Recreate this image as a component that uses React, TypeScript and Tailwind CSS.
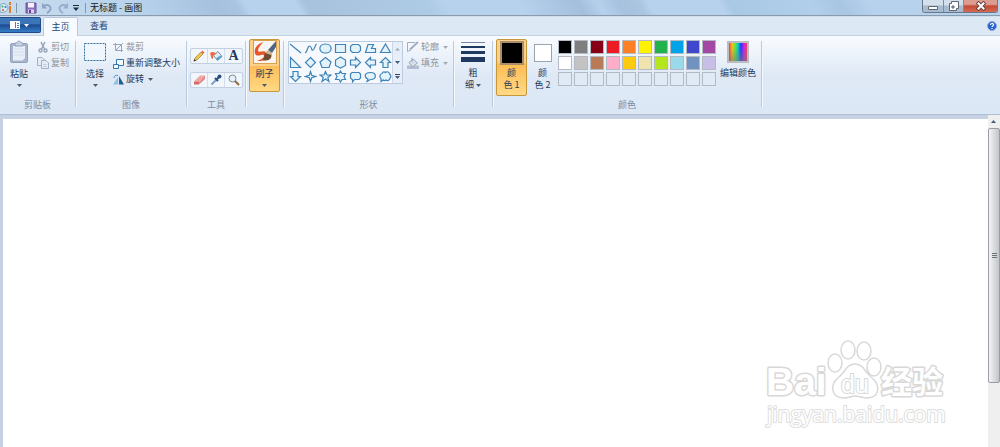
import type { ReactNode } from 'react'

const PALETTE = [
  ['#000000', '#7f7f7f', '#880015', '#ed1c24', '#ff7f27', '#fff200', '#22b14c', '#00a2e8', '#3f48cc', '#a349a4'],
  ['#ffffff', '#c3c3c3', '#b97a57', '#ffaec9', '#ffc90e', '#efe4b0', '#b5e61d', '#99d9ea', '#7092be', '#c8bfe7'],
  ['', '', '', '', '', '', '', '', '', ''],
]

const SHAPES = [
  { name: '直线', d: 'M1 2L12 11' },
  { name: '曲线', d: 'M1 11C4 10 3 4 5.500 4S7 9 9 8S11 3 12.500 2' },
  { name: '椭圆形', d: 'M6.500 2C14 2 14 11 6.500 11S-1 2 6.500 2Z' },
  { name: '矩形', d: 'M1.500 2.500H11.500V10.500H1.500Z' },
  { name: '圆角矩形', d: 'M3.500 2.500H9.500L11.500 4.500V8.500L9.500 10.500H3.500L1.500 8.500V4.500Z' },
  { name: '多边形', d: 'M4 2.500H9.500L7.500 6.500H11.500V10.500H1.500Z' },
  { name: '三角形', d: 'M6.500 2L11.500 10.500H1.500Z' },
  { name: '直角三角形', d: 'M1.500 1.500L11.500 11.500H1.500Z' },
  { name: '菱形', d: 'M6.500 1.500L11.500 6.500L6.500 11.500L1.500 6.500Z' },
  { name: '五边形', d: 'M6.500 1.500L12 6L10 11.500H3L1 6Z' },
  { name: '六边形', d: 'M6.500 1L11.500 4V9.500L6.500 12L1.500 9.500V4Z' },
  { name: '右箭头', d: 'M1.500 4H6.500V1.500L11.500 6.500L6.500 11.500V9H1.500Z' },
  { name: '左箭头', d: 'M11.500 4H6.500V1.500L1.500 6.500L6.500 11.500V9H11.500Z' },
  { name: '上箭头', d: 'M4 11.500V6.500H1.500L6.500 1.500L11.500 6.500H9V11.500Z' },
  { name: '下箭头', d: 'M4 1.500V6.500H1.500L6.500 11.500L11.500 6.500H9V1.500Z' },
  { name: '四角星形', d: 'M6.500 1.500L7.700 5.300L11.500 6.500L7.700 7.700L6.500 11.500L5.300 7.700L1.500 6.500L5.300 5.300Z' },
  { name: '五角星形', d: 'M6.500 1.500L8 5H12L8.800 7.500L10 11.500L6.500 9L3 11.500L4.200 7.500L1 5H5Z' },
  { name: '六角星形', d: 'M6.500 1L8 3.500H11.500L10 6.500L11.500 9.500H8L6.500 12L5 9.500H1.500L3 6.500L1.500 3.500H5Z' },
  { name: '圆角矩形标注', d: 'M3 2.500H10L11.500 4V8L10 9.500H5.500L3.500 12V9.500H3L1.500 8V4Z' },
  { name: '椭圆形标注', d: 'M4 9C0 7.500 0 2.500 6.500 2.500S13 9.500 6.500 9.500L3 11.500Z' },
  { name: '云形标注', d: 'M3 3.500C4 1 6 2 6.500 2.500C8 1 10.500 2 10.500 4C12.500 5 12 7.500 11 8C11 10.500 8 11 7 10C6 11 4 10.500 4 10L2 11.500V8.500C0 7 1 4 3 3.500Z' },
]

function Arrow({ dim = false }: { dim?: boolean }) {
  return (
    <svg viewBox="0 0 5 3" className={dim ? 'h-[3px] w-[5px] shrink-0 fill-[#a3abb5]' : 'h-[3px] w-[5px] shrink-0 fill-[#4a5c75]'}>
      <path d="M0 0H5L2.500 3Z" />
    </svg>
  )
}

function Separator() {
  return <div className="mt-0.5 mb-1 w-px shrink-0 bg-[#bccadd] shadow-[1px_0_0_#f4f8fd]" />
}

function Group({ label, className, children }: { label: string; className: string; children: ReactNode }) {
  return (
    <section aria-label={label} className={`flex h-[72px] shrink-0 flex-col ${className}`}>
      <div className="flex flex-1 items-start">{children}</div>
      <div className="h-3 text-center leading-3 text-[#7c8ba2]">{label}</div>
    </section>
  )
}

function SmallButton({ icon, label, disabled = false, arrow = false }: {
  icon: ReactNode
  label: string
  disabled?: boolean
  arrow?: boolean
}) {
  return (
    <button
      type="button"
      disabled={disabled}
      className="flex h-4 items-center gap-0.5 whitespace-nowrap leading-3 disabled:text-[#8e9299]"
    >
      {icon}
      <span>{label}</span>
      {arrow && <span className="ml-0.5"><Arrow dim={disabled} /></span>}
    </button>
  )
}

function BigButton({ icon, label, className }: { icon: ReactNode; label: string; className: string }) {
  return (
    <button type="button" className={`flex flex-col items-center ${className}`}>
      <span className="flex h-6 items-center">{icon}</span>
      <span className="mt-1 leading-3">{label}</span>
      <span className="mt-1"><Arrow /></span>
    </button>
  )
}

function PasteIcon() {
  return (
    <svg viewBox="0 0 20 24" className="h-6 w-5">
      <rect x="1.500" y="3.500" width="17" height="19" rx="1.500" fill="#a8b5cd" stroke="#94a2bd" />
      <path d="M4 6H16V18L13.500 20.500H4Z" fill="#e9eff8" />
      <path d="M5 9H15M5 12H15M5 15H15" stroke="#d2dceb" />
      <path d="M6 3H8C8 .5 12 .5 12 3H14V6H6Z" fill="#c9d3e3" stroke="#94a2bd" />
    </svg>
  )
}

function CutIcon() {
  return (
    <svg viewBox="0 0 12 12" className="h-3 w-3" fill="none" stroke="#98a5ba" strokeWidth="1.500">
      <path d="M4 1L7.500 8M8 1L4.500 8" />
      <circle cx="3.500" cy="9.500" r="1.500" />
      <circle cx="8.500" cy="9.500" r="1.500" />
    </svg>
  )
}

function CopyIcon() {
  return (
    <svg viewBox="0 0 12 12" className="h-3 w-3" fill="#e6edf7" stroke="#a2b0c8">
      <path d="M.5 .5H5L7.500 3V8.500H.5Z" />
      <path d="M4.500 3.500H9L11.500 6V11.500H4.500Z" />
      <path d="M6 7.500H10M6 9.500H10" stroke="#c3cede" />
    </svg>
  )
}

function CropIcon() {
  return (
    <svg viewBox="0 0 11 11" className="h-[11px] w-[11px]" fill="none" stroke="#98a4b7">
      <path d="M2.500 1V8.500H10M0 2.500H8.500V10M3 8L10 1" />
    </svg>
  )
}

function ResizeIcon() {
  return (
    <svg viewBox="0 0 11 11" className="h-[11px] w-[11px]" fill="#f4faff" stroke="#2f78b0">
      <path d="M3.500 1.500H10.500V7.500H3.500Z" />
      <path d="M.5 6.500H5.500V10.500H.5Z" />
    </svg>
  )
}

function RotateIcon() {
  return (
    <svg viewBox="0 0 11 11" className="h-[11px] w-[11px]">
      <path d="M5 3V10.500H0Z" fill="#8cc0e6" />
      <path d="M6 2L11 10.500H6Z" fill="#1c5f94" />
      <path d="M1 4C1 1.500 3 1 5 1.500" fill="none" stroke="#3b8ec9" />
    </svg>
  )
}

function OutlineIcon() {
  return (
    <svg viewBox="0 0 12 12" className="h-3 w-3" fill="none" stroke="#a0adc2">
      <path d="M8 1.500H.5V10.500L4 9" />
      <path d="M3 8.500L11 1" strokeWidth="2" />
    </svg>
  )
}

function FillIcon() {
  return (
    <svg viewBox="0 0 12 12" className="h-3 w-3">
      <path d="M0 8.500H12V12H0Z" fill="#b1bed3" />
      <path d="M2 5.500L6 2L10.500 6L5.500 10Z" fill="#d7dfeb" stroke="#98a6bd" />
      <path d="M5 5V.5" stroke="#98a6bd" />
    </svg>
  )
}

const TOOL_ROWS: { name: string; icon: ReactNode }[][] = [
  [
    {
      name: '铅笔',
      icon: (
        <svg viewBox="0 0 12 12" className="h-3 w-3">
          <path d="M1 11L2 8L8 2L10 4L4 10Z" fill="#f0c452" stroke="#a07a35" strokeWidth=".7" />
          <path d="M8 2L9.500 .8L11.500 2.500L10 4Z" fill="#d9694f" />
          <path d="M.5 11.500L1.500 9L3 10.500Z" fill="#333" />
        </svg>
      ),
    },
    {
      name: '用颜色填充',
      icon: (
        <svg viewBox="0 0 13 12" className="h-3 w-[13px]">
          <path d="M3.500 5.500L8 1.500L12 6.500L7.500 10.500Z" fill="#dfedf7" stroke="#7095b6" />
          <path d="M7 7.500L11 5.500L12 6.500L7.500 10.500L6 9Z" fill="#5b9dcb" />
          <path d="M0 3C2 1 5 2 7 4C4 4 3 5 3 9C1 9 1 6 0 3Z" fill="#ef6d3e" />
        </svg>
      ),
    },
    { name: '文本', icon: <span className="font-['Liberation_Serif',serif] text-sm font-bold leading-3 text-[#1f3a5f]">A</span> },
  ],
  [
    {
      name: '橡皮擦',
      icon: (
        <svg viewBox="0 0 13 12" className="h-3 w-[13px]">
          <path d="M1 7.500L7 1.500H12L7 7.500Z" fill="#f1a7a0" />
          <path d="M1 7.500H7L6 10.500H1Z" fill="#d66a67" />
          <path d="M7 7.500L12 1.500V5L6 10.500Z" fill="#e0837d" />
        </svg>
      ),
    },
    {
      name: '颜色选取器',
      icon: (
        <svg viewBox="0 0 12 12" className="h-3 w-3">
          <path d="M1.500 10.500L7 5" stroke="#7da2c6" strokeWidth="2" />
          <path d="M5 4L8 7M7 5L10 2" stroke="#27517e" strokeWidth="2" />
          <circle cx="9.500" cy="2.500" r="2" fill="#27517e" />
        </svg>
      ),
    },
    {
      name: '放大镜',
      icon: (
        <svg viewBox="0 0 12 12" className="h-3 w-3">
          <circle cx="4.500" cy="4.500" r="3.500" fill="#e3f1fa" stroke="#7f8d9c" />
          <path d="M7 7L11 11" stroke="#95673e" strokeWidth="2" />
        </svg>
      ),
    },
  ],
]

function BrushIcon() {
  return (
    <svg viewBox="0 0 24 24" className="h-6 w-6">
      <rect x=".5" y=".5" width="23" height="23" fill="#f8f5f1" stroke="#d8a24d" />
      <path d="M11 2C2 4 0 12 3 15C5 17 11 13 11 16C11 18 7 20 4 21C13 22 17 15 13 12C10 10 6 13 5 11C5 8 8 4 11 2Z" fill="#e8542a" />
      <path d="M23 1L15 10L19 13L23 7Z" fill="#4b6788" />
      <path d="M12 13L18 13C20 18 16 22 9 20C12 19 11 15 12 13Z" fill="#704a31" />
      <path d="M15 10L19 13L18 15L12 13Z" fill="#c9b08c" />
    </svg>
  )
}

function TitleBar() {
  return (
    <header className="flex h-[17px] items-start border-b border-[#d3deea] bg-[linear-gradient(60deg,#c9dcef_0%,#b8d3ec_14%,#a6c1de_22%,#a9c4e0_24%,#b7d2ed_25%,#b7d2ed_30%,#a7c2dd_31%,#aecbe6_43%,#b7d2ed_45%,#b7d2ed_52%,#a4bfdb_58%,#b6d1ec_60%,#a6c2de_62%,#a9c5e0_64%,#b7d2ed_65%,#b7d2ed_72%,#a9c8e4_73%,#b1cfea_81%,#a8c6e2_84%,#b7d2ed_87%)]">
      <div className="flex h-4 flex-1 items-start border-b border-[#899caf]">
        <div className="flex h-[15px] items-center">
          <svg viewBox="0 0 12 13" className="h-[13px] w-3">
            <path d="M0 4C3 1 8 3 8 7S3 12 0 11Z" fill="#d4e9f5" stroke="#7ba5c1" />
            <circle cx="2.500" cy="5.500" r="1" fill="#3aa856" />
            <circle cx="5.500" cy="6" r="1" fill="#3c70c8" />
            <circle cx="3" cy="9" r="1" fill="#db5034" />
            <path d="M10 12V5M10 1V4" stroke="#e57b26" strokeWidth="2" />
          </svg>
          <div className="mx-1 h-2.5 w-px bg-[#8296ac]" />
          <div className="flex items-center gap-1 pl-1">
            <button type="button" aria-label="保存">
              <svg viewBox="0 0 12 12" className="h-3 w-3">
                <path d="M1 1H11V11H1Z" fill="#8a6bbb" stroke="#6c52a0" />
                <path d="M3 1H9V5.500H3Z" fill="#f3f2fb" />
                <path d="M3 7.500H9V11H3Z" fill="#d9d3ec" />
                <path d="M4 8H6V11H4Z" fill="#59418d" />
              </svg>
            </button>
            <button type="button" aria-label="撤消" disabled>
              <svg viewBox="0 0 12 12" className="h-3 w-3" fill="none" stroke="#8ea6c6" strokeWidth="2">
                <path d="M3 3.500C8 2 10 5 9.500 7C9 9 8 10 6 11" />
                <path d="M1 .5V6.500H6Z" fill="#8ea6c6" stroke="none" />
              </svg>
            </button>
            <button type="button" aria-label="重做" disabled>
              <svg viewBox="0 0 12 12" className="h-3 w-3" fill="none" stroke="#98aeca" strokeWidth="2">
                <path d="M9 3.500C4 2 2 5 2.500 7C3 9 4 10 6 11" />
                <path d="M11 .5V6.500H6Z" fill="#98aeca" stroke="none" />
              </svg>
            </button>
            <button type="button" aria-label="自定义快速访问工具栏">
              <svg viewBox="0 0 6 6" className="h-1.5 w-1.5">
                <path d="M0 0H6V1H0ZM0 2.500H6L3 6Z" fill="#1d2b3c" />
              </svg>
            </button>
          </div>
          <div className="mr-1 ml-1.5 h-2.5 w-px bg-[#8296ac]" />
          <h1 className="whitespace-nowrap leading-[15px] text-[#101820]">无标题 - 画图</h1>
        </div>
        <div className="mr-0.5 ml-auto flex h-[13px] overflow-hidden rounded-b-[3px] border border-t-0 border-[#68788a]">
          <button type="button" aria-label="最小化" className="flex w-[21px] items-center justify-center border-r border-[#7d8c9e] bg-linear-to-b from-[#d3dfeb] from-40% to-[#a9bccf] to-50%">
            <svg viewBox="0 0 10 10" className="h-2.5 w-2.5">
              <path d="M.5 5.500H9.500V8.500H.5Z" fill="#fff" stroke="#5d6876" />
            </svg>
          </button>
          <button type="button" aria-label="还原" className="flex w-5 items-center justify-center border-r border-[#7d8c9e] bg-linear-to-b from-[#d3dfeb] from-40% to-[#a9bccf] to-50%">
            <svg viewBox="0 0 10 10" className="h-2.5 w-2.5">
              <path d="M2.500 .5H9.500V7.500H7.500V9.500H.5V2.500H2.500Z" fill="#fff" stroke="#5d6876" />
              <path d="M3 5H5V7H3Z" fill="#b4c4d5" stroke="#5d6876" />
            </svg>
          </button>
          <button type="button" aria-label="关闭" className="flex w-[33px] items-center justify-center bg-linear-to-b from-[#dc9d91] from-35% via-[#c44b35] via-50% to-[#d46b50]">
            <svg viewBox="0 0 10 10" className="h-2.5 w-2.5">
              <path d="M2.500 2.500L7.500 7.500M7.500 2.500L2.500 7.500" stroke="#6a4545" strokeWidth="4" strokeLinecap="square" />
              <path d="M2.500 2.500L7.500 7.500M7.500 2.500L2.500 7.500" stroke="#fff" strokeWidth="2" strokeLinecap="square" />
            </svg>
          </button>
        </div>
      </div>
    </header>
  )
}

function TabStrip() {
  return (
    <nav className="flex h-[18px] items-stretch bg-[#dde8f5]">
      <button type="button" aria-label="画图菜单" className="mb-0.5 flex w-[41px] items-center justify-center gap-1 rounded-r-xs border border-l-0 border-[#1e4c88] bg-linear-to-b from-[#3c74b8] from-40% via-[#1c4b92] via-50% to-[#377fc6] pr-0.5">
        <svg viewBox="0 0 10 8" className="h-2 w-2.5">
          <path d="M0 0H10V8H0Z" fill="#fff" />
          <path d="M5.500 1V7M7 2.500H9M7 4.500H9M7 6.500H9" stroke="#4a80bd" />
        </svg>
        <svg viewBox="0 0 5 3" className="h-[3px] w-[5px] fill-white"><path d="M0 0H5L2.500 3Z" /></svg>
      </button>
      <button type="button" className="z-10 -mb-px ml-0.5 w-[35px] rounded-t-xs border border-b-0 border-[#b7c9de] bg-[#f8fbfe] text-[#24477a]">主页</button>
      <button type="button" className="w-[42px] text-[#24477a]">查看</button>
      <button type="button" aria-label="帮助" className="mr-[3px] ml-auto">
        <svg viewBox="0 0 10 10" className="h-2.5 w-2.5">
          <circle cx="5" cy="5" r="4.500" fill="#2a62cf" stroke="#89a9dc" />
          <path d="M3.500 4C3.500 2 6.500 2 6.500 3.800C6.500 5 5 4.800 5 6M5 7V8" fill="none" stroke="#fff" strokeWidth="1.200" />
        </svg>
      </button>
    </nav>
  )
}

function Ribbon() {
  return (
    <div className="flex border-y border-t-[#c3d3e3] border-b-[#b0bfd3] bg-linear-to-b from-[#f9fcff] via-[#dfe9f6] via-50% to-[#dce7f5] py-[3px]">
      <Group label="剪贴板" className="w-[75px]">
        <BigButton className="ml-[3px] w-8 pt-px" icon={<PasteIcon />} label="粘贴" />
        <div className="ml-0.5 flex flex-col">
          <SmallButton disabled icon={<CutIcon />} label="剪切" />
          <SmallButton disabled icon={<CopyIcon />} label="复制" />
        </div>
      </Group>
      <Separator />

      <Group label="图像" className="w-[110px]">
        <BigButton
          className="ml-[3px] w-8 pt-px"
          icon={
            <svg viewBox="0 0 22 18" className="h-[18px] w-[22px]">
              <path d="M.5 .5H21.500V17.500H.5Z" fill="#eff6fd" stroke="#336f9f" strokeDasharray="2 1" />
            </svg>
          }
          label="选择"
        />
        <div className="ml-0.5 flex flex-col">
          <SmallButton disabled icon={<CropIcon />} label="裁剪" />
          <SmallButton icon={<ResizeIcon />} label="重新调整大小" />
          <SmallButton icon={<RotateIcon />} label="旋转" arrow />
        </div>
      </Group>
      <Separator />

      <Group label="工具" className="w-[58px]">
        <div className="ml-[3px] flex flex-col gap-2 pt-[9px]">
          {TOOL_ROWS.map((row) => (
            <div key={row[0].name} className="flex divide-x divide-[#d3deec] rounded-xs border border-[#c2d0e2] bg-[#f1f6fc]">
              {row.map((tool) => (
                <button key={tool.name} type="button" aria-label={tool.name} className="flex h-3.5 w-[17px] items-center justify-center">
                  {tool.icon}
                </button>
              ))}
            </div>
          ))}
        </div>
      </Group>
      <Separator />

      <div className="w-[37px] pl-[3px]">
        <BigButton
          className="h-[53px] w-[31px] rounded-xs border border-[#c7973c] bg-linear-to-b from-[#fbd08b] from-50% via-[#fdbd56] via-52% to-[#ffd983]"
          icon={<BrushIcon />}
          label="刷子"
        />
      </div>
      <Separator />

      <Group label="形状" className="w-[169px]">
        <div className="mt-0.5 ml-1 flex border border-[#bccbdf] bg-[#f5f9fe]">
          <div className="grid grid-cols-7 gap-x-0.5 gap-y-px">
            {SHAPES.map((shape) => (
              <button key={shape.name} type="button" aria-label={shape.name}>
                <svg viewBox="0 0 13 13" className="h-[13px] w-[13px]" fill="#e3f3fb" stroke="#3f83b8" strokeWidth="1.200">
                  <path d={shape.d} fill={shape.name === '直线' || shape.name === '曲线' ? 'none' : undefined} />
                </svg>
              </button>
            ))}
          </div>
          <div className="flex w-2.5 flex-col border-l border-[#cbd7e7] bg-[#e6eef9]">
            <button type="button" aria-label="上一行" disabled className="flex flex-1 rotate-180 items-center justify-center"><Arrow dim /></button>
            <button type="button" aria-label="下一行" className="flex flex-1 items-center justify-center"><Arrow /></button>
            <button type="button" aria-label="更多形状" className="flex flex-1 flex-col items-center justify-center gap-px">
              <span className="h-px w-[5px] bg-[#35475f]" />
              <Arrow />
            </button>
          </div>
        </div>
        <div className="ml-1 flex flex-col">
          <SmallButton disabled icon={<OutlineIcon />} label="轮廓" arrow />
          <SmallButton disabled icon={<FillIcon />} label="填充" arrow />
        </div>
      </Group>
      <Separator />

      <button type="button" className="flex w-[38px] flex-col items-center self-start pt-[3px]">
        <svg viewBox="0 0 24 20" className="h-5 w-6 fill-[#1f3a60]">
          <path d="M0 0H24V1H0Z" fillOpacity=".6" />
          <path d="M0 4H24V6H0ZM0 9H24V12H0ZM0 15H24V20H0Z" />
        </svg>
        <span className="mt-[5px] leading-3">粗</span>
        <span className="flex items-center gap-0.5 leading-3">细 <Arrow /></span>
      </button>
      <Separator />

      <Group label="颜色" className="w-[268px]">
        <button type="button" aria-pressed="true" className="ml-[3px] flex h-[57px] w-[31px] flex-col items-center rounded-xs border border-[#c7973c] bg-linear-to-b from-[#fbd08b] from-40% via-[#fdbd56] via-45% to-[#ffd983] pt-px">
          <span className="h-6 w-6 border-2 border-[#a98f68] bg-black" />
          <span className="mt-0.5 leading-3">颜</span>
          <span className="leading-3">色 1</span>
        </button>
        <button type="button" className="flex h-[57px] w-[31px] flex-col items-center pt-0.5">
          <span className="flex h-6 items-center"><span className="h-[18px] w-[18px] border border-[#9ba5b1] bg-white" /></span>
          <span className="mt-0.5 leading-3">颜</span>
          <span className="leading-3">色 2</span>
        </button>
        <div className="mt-px grid grid-cols-10 gap-x-0.5 gap-y-0.5">
          {PALETTE.flatMap((row, r) =>
            row.map((color, c) => (
              <button
                key={`${r}-${c}`}
                type="button"
                aria-label={color || '自定义颜色'}
                className="h-3.5 w-3.5 border border-[#b4bac2]"
                style={{ backgroundColor: color || '#e0e9f6' }}
              />
            )),
          )}
        </div>
        <button type="button" className="ml-1 flex flex-col items-center pt-px">
          <span className="flex h-6 items-center">
            <span className="h-[22px] w-[22px] border-2 border-[#b9bcc0] bg-[linear-gradient(to_bottom,transparent_20%,#77777799),linear-gradient(to_right,#f33,#fb2,#6e3,#0cc,#23f,#c2e,#f35)]" />
          </span>
          <span className="mt-[3px] whitespace-nowrap leading-3">编辑颜色</span>
        </button>
      </Group>
      <Separator />
    </div>
  )
}

function Watermark() {
  return (
    <svg
      viewBox="0 0 184 92"
      className="absolute right-10 bottom-4 h-[92px] w-[184px]"
      fill="#fff"
      stroke="#d8d8d8"
      strokeWidth="2"
      strokeLinejoin="round"
    >
      <text x="2" y="56" fontSize="39" strokeWidth="3" paintOrder="stroke" className="font-['Liberation_Sans',sans-serif] font-bold">Bai</text>
      <g strokeWidth="1.500">
        <ellipse cx="71" cy="24" rx="7" ry="9" />
        <ellipse cx="84" cy="11" rx="7" ry="9" />
        <ellipse cx="100" cy="12" rx="7" ry="9" />
        <ellipse cx="110" cy="28" rx="7" ry="9" />
        <path d="M91 25C83 25 81 33 75 38C66 45 66 58 79 59C86 59 87 57 91 57S99 59 104 59C117 58 116 45 107 38C101 33 99 25 91 25Z" />
      </g>
      <text x="77" y="54" fontSize="25" paintOrder="stroke" className="font-['Liberation_Sans',sans-serif]">du</text>
      <text x="117" y="54" fontSize="31" strokeWidth="3" paintOrder="stroke" className="font-['Noto_Sans_CJK_SC',sans-serif] font-bold">经验</text>
      <text x="3" y="83" fontSize="21" stroke="#dedede" paintOrder="stroke" className="font-['Open_Sans',sans-serif]">jingyan.baidu.com</text>
    </svg>
  )
}

export default function App() {
  return (
    <div className="flex min-h-screen flex-col bg-[#c6d2e4] font-['Noto_Sans_CJK_SC',sans-serif] text-[9px] leading-3 text-[#1e395b]">
      <TitleBar />
      <TabStrip />
      <Ribbon />
      <main className="flex flex-1">
        <div className="relative mt-1 ml-[3px] flex-1 bg-white">
          <Watermark />
        </div>
        <div className="flex w-3 flex-col bg-[#efefef]">
          <button type="button" aria-label="向上滚动" className="flex h-[13px] rotate-180 items-center justify-center"><Arrow /></button>
          <div className="flex-1">
            <div className="flex h-4/5 items-center justify-center rounded-xs border border-[#9a9da3] bg-linear-to-r from-[#f4f4f5] to-[#c3c5ca]">
              <svg viewBox="0 0 5 6" className="h-1.5 w-[5px]">
                <path d="M0 .5H5M0 2.500H5M0 4.500H5" stroke="#6f7378" />
              </svg>
            </div>
          </div>
        </div>
      </main>
    </div>
  )
}
